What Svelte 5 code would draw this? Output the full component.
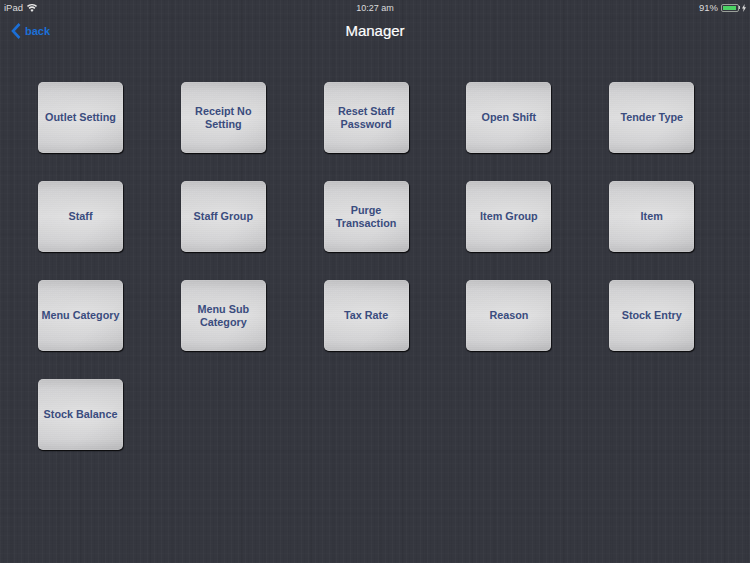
<script>
  const items = [
    'Outlet Setting', 'Receipt No Setting', 'Reset Staff Password', 'Open Shift', 'Tender Type',
    'Staff', 'Staff Group', 'Purge Transaction', 'Item Group', 'Item',
    'Menu Category', 'Menu Sub Category', 'Tax Rate', 'Reason', 'Stock Entry',
    'Stock Balance'
  ];
</script>

<div class="screen">
  <div class="status-bar">
    <div class="status-left">
      <span>iPad</span>
      <svg width="10" height="8" viewBox="0 0 10 8" fill="#e8e8e8">
        <path d="M5 8 3.4 5.9a2.6 2.6 0 0 1 3.2 0zM2.600 4.900 1.600 3.700a5.400 5.400 0 0 1 6.800 0L7.400 4.900a3.900 3.900 0 0 0-4.800 0zM.9 2.900 0 1.800a7.800 7.800 0 0 1 10 0L9.100 2.900a6.400 6.400 0 0 0-8.200 0z"/>
      </svg>
    </div>
    <span class="clock">10:27 am</span>
    <div class="status-right">
      <span>91%</span>
      <div class="battery"><div class="battery-fill" style="width: 91%"></div></div>
      <div class="battery-tip"></div>
      <svg width="4" height="8" viewBox="0 0 4 8" fill="#dddddd"><path d="M2.600 0 0 4.600h1.600L1.200 8 4 3.200H2.300z"/></svg>
    </div>
  </div>

  <div class="nav-bar">
    <button class="back">
      <svg width="10" height="16" viewBox="0 0 10 16" fill="none" stroke="#1c6fd6" stroke-width="2.600">
        <path d="M8.500 1 2 8l6.500 7"/>
      </svg>
      <span>back</span>
    </button>
    <span class="title">Manager</span>
    <span></span>
  </div>

  <div class="grid">
    {#each items as item}
      <button class="tile"><span>{item}</span></button>
    {/each}
  </div>
</div>

<style>
  :global(body) {
    margin: 0;
  }

  .screen {
    width: 750px;
    height: 563px;
    overflow: hidden;
    font-family: "Liberation Sans", Arial, sans-serif;
    background-color: #35373f;
    background-image:
      repeating-linear-gradient(90deg, rgba(255, 255, 255, 0.02) 0 1px, transparent 1px 3px, rgba(0, 0, 0, 0.035) 3px 4px, transparent 4px 7px),
      repeating-linear-gradient(90deg, transparent 0 11px, rgba(0, 0, 0, 0.03) 11px 13px, transparent 13px 23px),
      repeating-linear-gradient(0deg, rgba(255, 255, 255, 0.012) 0 1px, transparent 1px 4px, rgba(0, 0, 0, 0.02) 4px 5px, transparent 5px 9px),
      repeating-linear-gradient(0deg, transparent 0 17px, rgba(0, 0, 0, 0.02) 17px 20px, transparent 20px 31px);
  }

  .status-bar {
    height: 15px;
    padding: 0 4px;
    display: grid;
    grid-template-columns: 1fr auto 1fr;
    align-items: center;
    font-size: 9.500px;
    color: #dcdcdc;
  }

  .status-left {
    display: flex;
    align-items: center;
    gap: 4px;
  }

  .clock {
    font-size: 9px;
  }

  .status-right {
    display: flex;
    align-items: center;
    justify-content: flex-end;
    gap: 2px;
  }

  .battery {
    width: 18px;
    height: 8px;
    margin-left: 1px;
    padding: 1px;
    box-sizing: border-box;
    border: 1px solid #9aa09a;
    border-radius: 2px;
  }

  .battery-fill {
    height: 100%;
    background: #4cd264;
  }

  .battery-tip {
    width: 1px;
    height: 3px;
    margin-left: -2px;
    background: #c8c8c8;
  }

  .nav-bar {
    height: 31px;
    padding: 0 11px;
    display: grid;
    grid-template-columns: 1fr auto 1fr;
    align-items: center;
  }

  .back {
    display: flex;
    align-items: center;
    gap: 4px;
    padding: 0;
    border: 0;
    background: none;
    font: bold 11px "Liberation Sans", Arial, sans-serif;
    color: #1c6fd6;
  }

  .title {
    font-size: 15px;
    color: #ffffff;
    -webkit-text-stroke: 0.2px #ffffff;
  }

  .grid {
    margin-top: 36px;
    padding-left: 38px;
    display: grid;
    grid-template-columns: repeat(5, 85px);
    grid-auto-rows: 71px;
    column-gap: 57.800px;
    row-gap: 28px;
  }

  .tile {
    padding: 0 2px;
    border: 0;
    border-radius: 5px;
    background:
      radial-gradient(ellipse 70% 55% at 50% 50%, rgba(255, 255, 255, 0.22), rgba(255, 255, 255, 0) 100%),
      repeating-linear-gradient(0deg, rgba(255, 255, 255, 0.035) 0 1px, rgba(0, 0, 0, 0.012) 1px 2px),
      linear-gradient(135deg, rgba(255, 255, 255, 0.1), rgba(0, 0, 0, 0) 35%, rgba(0, 0, 0, 0) 65%, rgba(0, 0, 0, 0.05)),
      linear-gradient(180deg, #bcbcbe 0%, #cdcdcf 14%, #dadadb 50%, #cfcfd1 86%, #c1c1c3 100%);
    box-shadow:
      inset 0 0 1px rgba(255, 255, 255, 0.8),
      0 1px 1px #0d0d0f,
      1px 1px 1px rgba(0, 0, 0, 0.65);
    font: bold 10.800px/13px "Liberation Sans", Arial, sans-serif;
    color: #3a4c7e;
    text-align: center;
  }
</style>
